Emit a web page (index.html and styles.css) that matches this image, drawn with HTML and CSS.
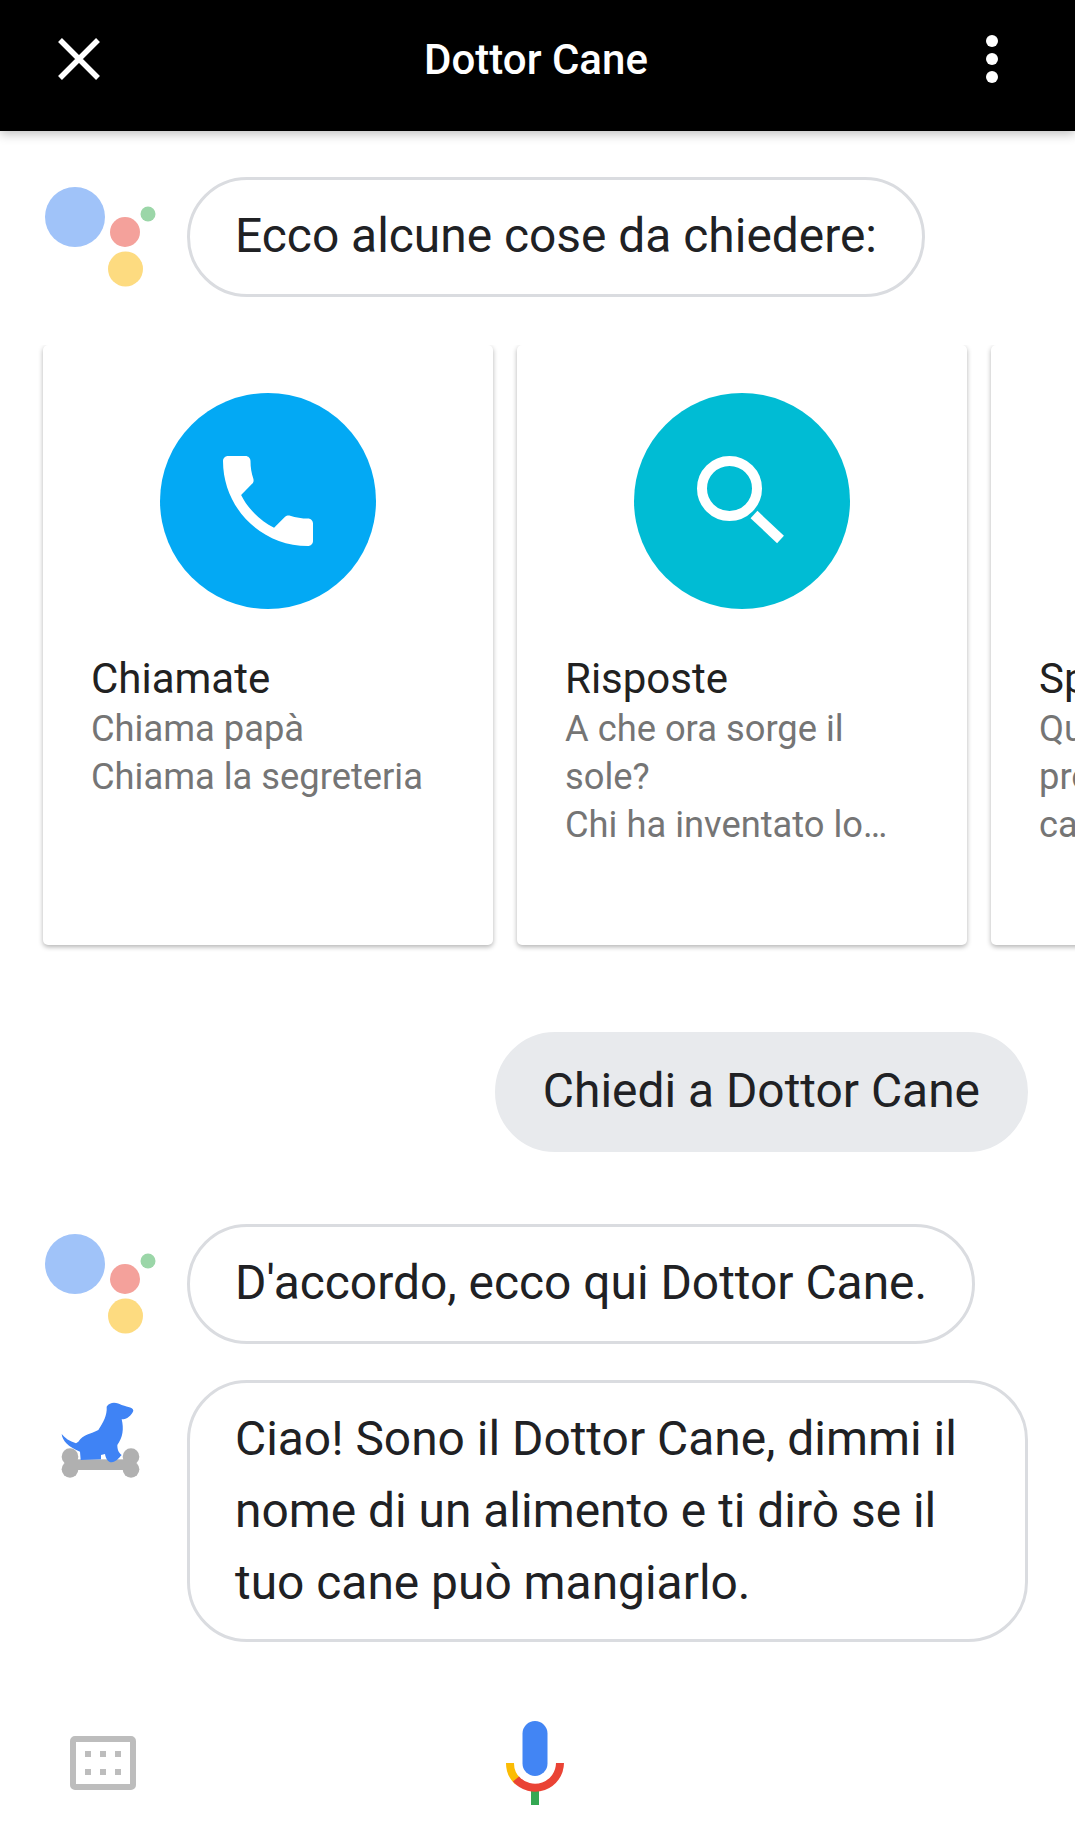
FILE: index.html
```html
<!DOCTYPE html>
<html>
<head>
<title>Dottor Cane</title>
<link rel="stylesheet" href="styles.css">
</head>

<body>

<div class="topbar">
	<svg class="close-icon" viewBox="0 0 42 42"><path d="M2 2L40 40M40 2L2 40"/></svg>
	<div class="topbar-title">Dottor Cane</div>
	<div class="more-icon"><span></span><span></span><span></span></div>
</div>

<div class="row row-first">
	<svg class="avatar" viewBox="0 0 144 120">
		<circle cx="32" cy="40" r="30" fill="#a0c3f9"/>
		<circle cx="82" cy="55" r="15" fill="#f4a19b"/>
		<circle cx="82.5" cy="92" r="17.5" fill="#fddb80"/>
		<circle cx="105" cy="37" r="7.5" fill="#9bd6a8"/>
	</svg>
	<div class="bubble">Ecco alcune cose da chiedere:</div>
</div>

<div class="cards">
	<div class="card">
		<div class="card-circle circle-blue">
			<svg class="phone-icon" viewBox="3 3 18 18"><path d="M20 15.5c-1.25 0-2.45-.2-3.57-.57-.35-.11-.74-.03-1.02.24l-2.2 2.2c-2.83-1.44-5.15-3.75-6.59-6.59l2.2-2.21c.28-.26.36-.65.25-1C8.7 6.45 8.5 5.25 8.5 4c0-.55-.45-1-1-1H4c-.55 0-1 .45-1 1 0 9.39 7.61 17 17 17 .55 0 1-.45 1-1v-3.5c0-.55-.45-1-1-1z"/></svg>
		</div>
		<div class="card-title">Chiamate</div>
		<div class="card-line">Chiama papà</div>
		<div class="card-line">Chiama la segreteria</div>
	</div>
	<div class="card">
		<div class="card-circle circle-teal">
			<svg class="search-icon" viewBox="0 0 100 100"><circle cx="37.5" cy="37.5" r="27.5"/><path d="M62 63.5L88.5 88.5"/></svg>
		</div>
		<div class="card-title">Risposte</div>
		<div class="card-line">A che ora sorge il sole?</div>
		<div class="card-line">Chi ha inventato lo…</div>
	</div>
	<div class="card">
		<div class="card-circle circle-teal"></div>
		<div class="card-title">Sport</div>
		<div class="card-line">Quanto dura la prossima partita di calcio?</div>
	</div>
</div>

<div class="row row-user">
	<div class="bubble bubble-user">Chiedi a Dottor Cane</div>
</div>

<div class="row row-reply">
	<svg class="avatar" viewBox="0 0 144 120">
		<circle cx="32" cy="40" r="30" fill="#a0c3f9"/>
		<circle cx="82" cy="55" r="15" fill="#f4a19b"/>
		<circle cx="82.5" cy="92" r="17.5" fill="#fddb80"/>
		<circle cx="105" cy="37" r="7.5" fill="#9bd6a8"/>
	</svg>
	<div class="bubble">D'accordo, ecco qui Dottor Cane.</div>
</div>

<div class="row row-dog">
	<svg class="avatar" viewBox="0 0 432 360">
		<g fill="#b0b0b0">
			<circle cx="81" cy="230" r="25"/>
			<circle cx="81" cy="268" r="25"/>
			<circle cx="264" cy="230" r="25"/>
			<circle cx="264" cy="268" r="25"/>
			<rect x="81" y="238" width="183" height="32"/>
		</g>
		<path fill="#3f83f5" d="M56 162C58 182 75 200 111 215L113 240L174 238L174 225L186 222C188 236 196 247 206 247C218 246 226 236 236 225C228 218 223 212 223 195C240 172 243 147 236 118C252 118 266 106 271 92C270 82 258 82 236 75C225 68 202 62 191 80C193 107 180 127 166 150C145 162 120 162 106 185L99 190C80 184 65 174 56 162Z"/>
	</svg>
	<div class="bubble bubble-wide">Ciao! Sono il Dottor Cane, dimmi il nome di un alimento e ti dirò se il tuo cane può mangiarlo.</div>
</div>

<div class="bottombar">
	<svg class="keyboard-icon" viewBox="0 0 66 54">
		<rect x="3" y="3" width="60" height="48" rx="2" fill="none" stroke="#bdbdbd" stroke-width="6"/>
		<g fill="#bdbdbd">
			<rect x="15" y="15" width="6" height="6"/><rect x="30" y="15" width="6" height="6"/><rect x="45" y="15" width="6" height="6"/>
			<rect x="15" y="33" width="6" height="6"/><rect x="30" y="33" width="6" height="6"/><rect x="45" y="33" width="6" height="6"/>
		</g>
	</svg>
	<svg class="mic-icon" viewBox="0 0 58 84">
		<rect x="16.5" y="0" width="25" height="55" rx="12.5" fill="#4285f4"/>
		<rect x="25" y="70" width="8" height="14" fill="#34a853"/>
		<path d="M4 42A25 25 0 0 0 12 60.5" fill="none" stroke="#fbbc05" stroke-width="8"/>
		<path d="M10 58A25 25 0 0 0 54 42" fill="none" stroke="#ea4335" stroke-width="8"/>
	</svg>
</div>

</body>
</html>
```

FILE: styles.css
```css
html, body {
	margin: 0;
	height: 1847px;
	overflow: hidden;
}
body {
	background: #fff;
	color: #202124;
	font-family: Roboto, sans-serif;
}

.topbar {
	height: 131px;
	background: #000;
	color: #fff;
	display: flex;
	align-items: flex-start;
	box-shadow: 0 3px 10px rgba(0, 0, 0, 0.25);
	position: relative;
}
.close-icon {
	width: 42px;
	height: 42px;
	margin: 38px 0 0 58px;
}
.close-icon path {
	fill: none;
	stroke: #fff;
	stroke-width: 5.5;
}
.topbar-title {
	flex: 1;
	text-align: center;
	font-size: 42px;
	font-weight: 500;
	line-height: 44px;
	margin-top: 38px;
	padding-right: 14px;
}
.more-icon {
	width: 12px;
	margin: 35px 77px 0 0;
	display: flex;
	flex-direction: column;
	gap: 6px;
}
.more-icon span {
	height: 12px;
	border-radius: 50%;
	background: #fff;
}

.row {
	display: flex;
	padding-left: 43px;
}
.row-first { margin-top: 46px; }
.row-user {
	margin-top: 87px;
	padding-right: 47px;
	justify-content: flex-end;
}
.row-reply { margin-top: 72px; }
.row-dog { margin-top: 36px; }

.avatar {
	flex: none;
	width: 144px;
	height: 120px;
}
.bubble {
	border: 3px solid #dadce0;
	border-radius: 60px;
	padding: 20px 45px 22px;
	font-size: 47.9px;
	line-height: 72px;
	white-space: nowrap;
}
.bubble-user {
	background: #e8eaed;
	border-color: #e8eaed;
}
.bubble-wide {
	width: 841px;
	box-sizing: border-box;
	padding: 20px 45px;
	white-space: normal;
}

.cards {
	display: flex;
	gap: 24px;
	margin-top: 48px;
	padding-left: 43px;
	overflow: hidden;
	padding-bottom: 8px;
	margin-bottom: -8px;
}
.card {
	flex: none;
	box-sizing: border-box;
	width: 450px;
	height: 600px;
	padding: 48px 48px 0;
	background: #fff;
	border-radius: 5px;
	box-shadow: 0 2px 5px rgba(0, 0, 0, 0.3);
}
.card-circle {
	width: 216px;
	height: 216px;
	margin: 0 auto 45px;
	border-radius: 50%;
	display: flex;
	align-items: center;
	justify-content: center;
}
.circle-blue { background: #03a9f4; }
.circle-teal { background: #00bcd4; }
.phone-icon {
	width: 90px;
	height: 90px;
	fill: #fff;
}
.search-icon {
	width: 100px;
	height: 100px;
	fill: none;
	stroke: #fff;
	stroke-width: 10;
}
.card-title {
	font-size: 42px;
	line-height: 50px;
	margin-bottom: 1px;
	color: #212121;
}
.card-line {
	font-size: 36.3px;
	line-height: 48px;
	color: #757575;
}

.bottombar {
	display: flex;
	align-items: flex-start;
	margin-top: 79px;
	padding-left: 70px;
}
.keyboard-icon {
	width: 66px;
	height: 54px;
	margin-top: 15px;
}
.mic-icon {
	width: 58px;
	height: 84px;
	margin-left: 370px;
}
```
